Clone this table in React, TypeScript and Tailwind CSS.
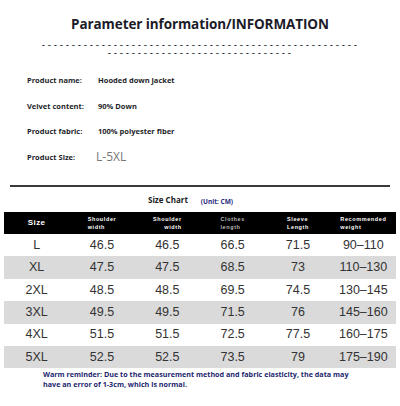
const specs = [
    { label: "Product name:", value: "Hooded down jacket" },
    { label: "Velvet content:", value: "90% Down" },
    { label: "Product fabric:", value: "100% polyester fiber" },
];

const heads = [
    { lines: ["Shoulder", "width"], align: "text-left", tone: "text-white" },
    { lines: ["Shoulder", "width"], align: "text-right", tone: "text-white" },
    { lines: ["Clothes", "length"], align: "text-left", tone: "text-[#b8b8b8]" },
    { lines: ["Sleeve", "Length"], align: "text-left", tone: "text-white" },
    { lines: ["Recommended", "weight"], align: "text-left", tone: "text-white" },
];

const rows = [
    ["L", "46.5", "46.5", "66.5", "71.5", "90–110"],
    ["XL", "47.5", "47.5", "68.5", "73", "110–130"],
    ["2XL", "48.5", "48.5", "69.5", "74.5", "130–145"],
    ["3XL", "49.5", "49.5", "71.5", "76", "145–160"],
    ["4XL", "51.5", "51.5", "72.5", "77.5", "160–175"],
    ["5XL", "52.5", "52.5", "73.5", "79", "175–190"],
];

const App = () => {
    return (
        <div className="h-[406px] w-[400px] overflow-hidden bg-white font-['Open_Sans',sans-serif]">
            <h1 className="pt-[14px] text-center text-[13.5px] font-bold leading-[20px] tracking-[-0.1px] text-[#1b1b28]">
                Parameter information/INFORMATION
            </h1>

            {/* dashed divider, two rows */}
            <div className="mt-[7px] flex flex-col items-center font-['Liberation_Mono',monospace] text-[8px] font-bold leading-[8px] tracking-[1.2px] text-[#222]">
                <span>{"-".repeat(53)}</span>
                <span>{"-".repeat(31)}</span>
            </div>

            <div className="mt-[11px] flex flex-col pl-[27px]">
                {specs.map((spec) => (
                    <div key={spec.label} className="flex h-[25.5px] items-center text-[7.5px] font-bold text-[#1e1e2a]">
                        <span className="w-[71px]">{spec.label}</span>
                        <span>{spec.value}</span>
                    </div>
                ))}
                <div className="flex h-[25.5px] items-center">
                    <span className="w-[69px] text-[7.5px] font-bold text-[#1e1e2a]">Product Size:</span>
                    <span className="text-[12px] text-[#777]">L-5XL</span>
                </div>
            </div>

            <div className="mx-[10px] mt-[15px] h-[2px] bg-[#3a3a3a]" />

            <div className="mt-[6px] flex h-[14px] items-center pl-[148px]">
                <span className="text-[8px] font-bold text-[#1b1b1b]">Size Chart</span>
                <span className="ml-[13px] mt-[4px] text-[6.5px] font-bold text-[#1f2a80]">(Unit: CM)</span>
            </div>

            <div className="mx-[4px] mt-[5px] font-['Liberation_Sans',Arial,sans-serif]">
                <div className="grid h-[22px] grid-cols-6 items-center bg-black">
                    <span className="text-center text-[8px] font-bold tracking-[0.4px] text-white">Size</span>
                    {heads.map((head, index) => (
                        <div key={index} className="flex justify-center">
                            <div className={`${head.align} ${head.tone} text-[5.5px] font-bold leading-[8px] tracking-[0.6px]`}>
                                {head.lines.map((line) => (
                                    <div key={line}>{line}</div>
                                ))}
                            </div>
                        </div>
                    ))}
                </div>
                {rows.map((row, index) => (
                    <div
                        key={row[0]}
                        className={`grid h-[22.4px] grid-cols-6 items-center text-center text-[12.5px] text-[#333] ${index % 2 === 1 ? "bg-[#dadada]" : "bg-white"}`}
                    >
                        {row.map((cell, cellIndex) => (
                            <span key={cellIndex}>{cell}</span>
                        ))}
                    </div>
                ))}
            </div>

            <p className="mt-[1px] w-[360px] pl-[43px] text-[7.2px] font-bold leading-[10px] text-[#1c1f6e]">
                Warm reminder: Due to the measurement method and fabric elasticity, the data may have an error of 1-3cm, which is normal.
            </p>
        </div>
    );
};

export default App;
